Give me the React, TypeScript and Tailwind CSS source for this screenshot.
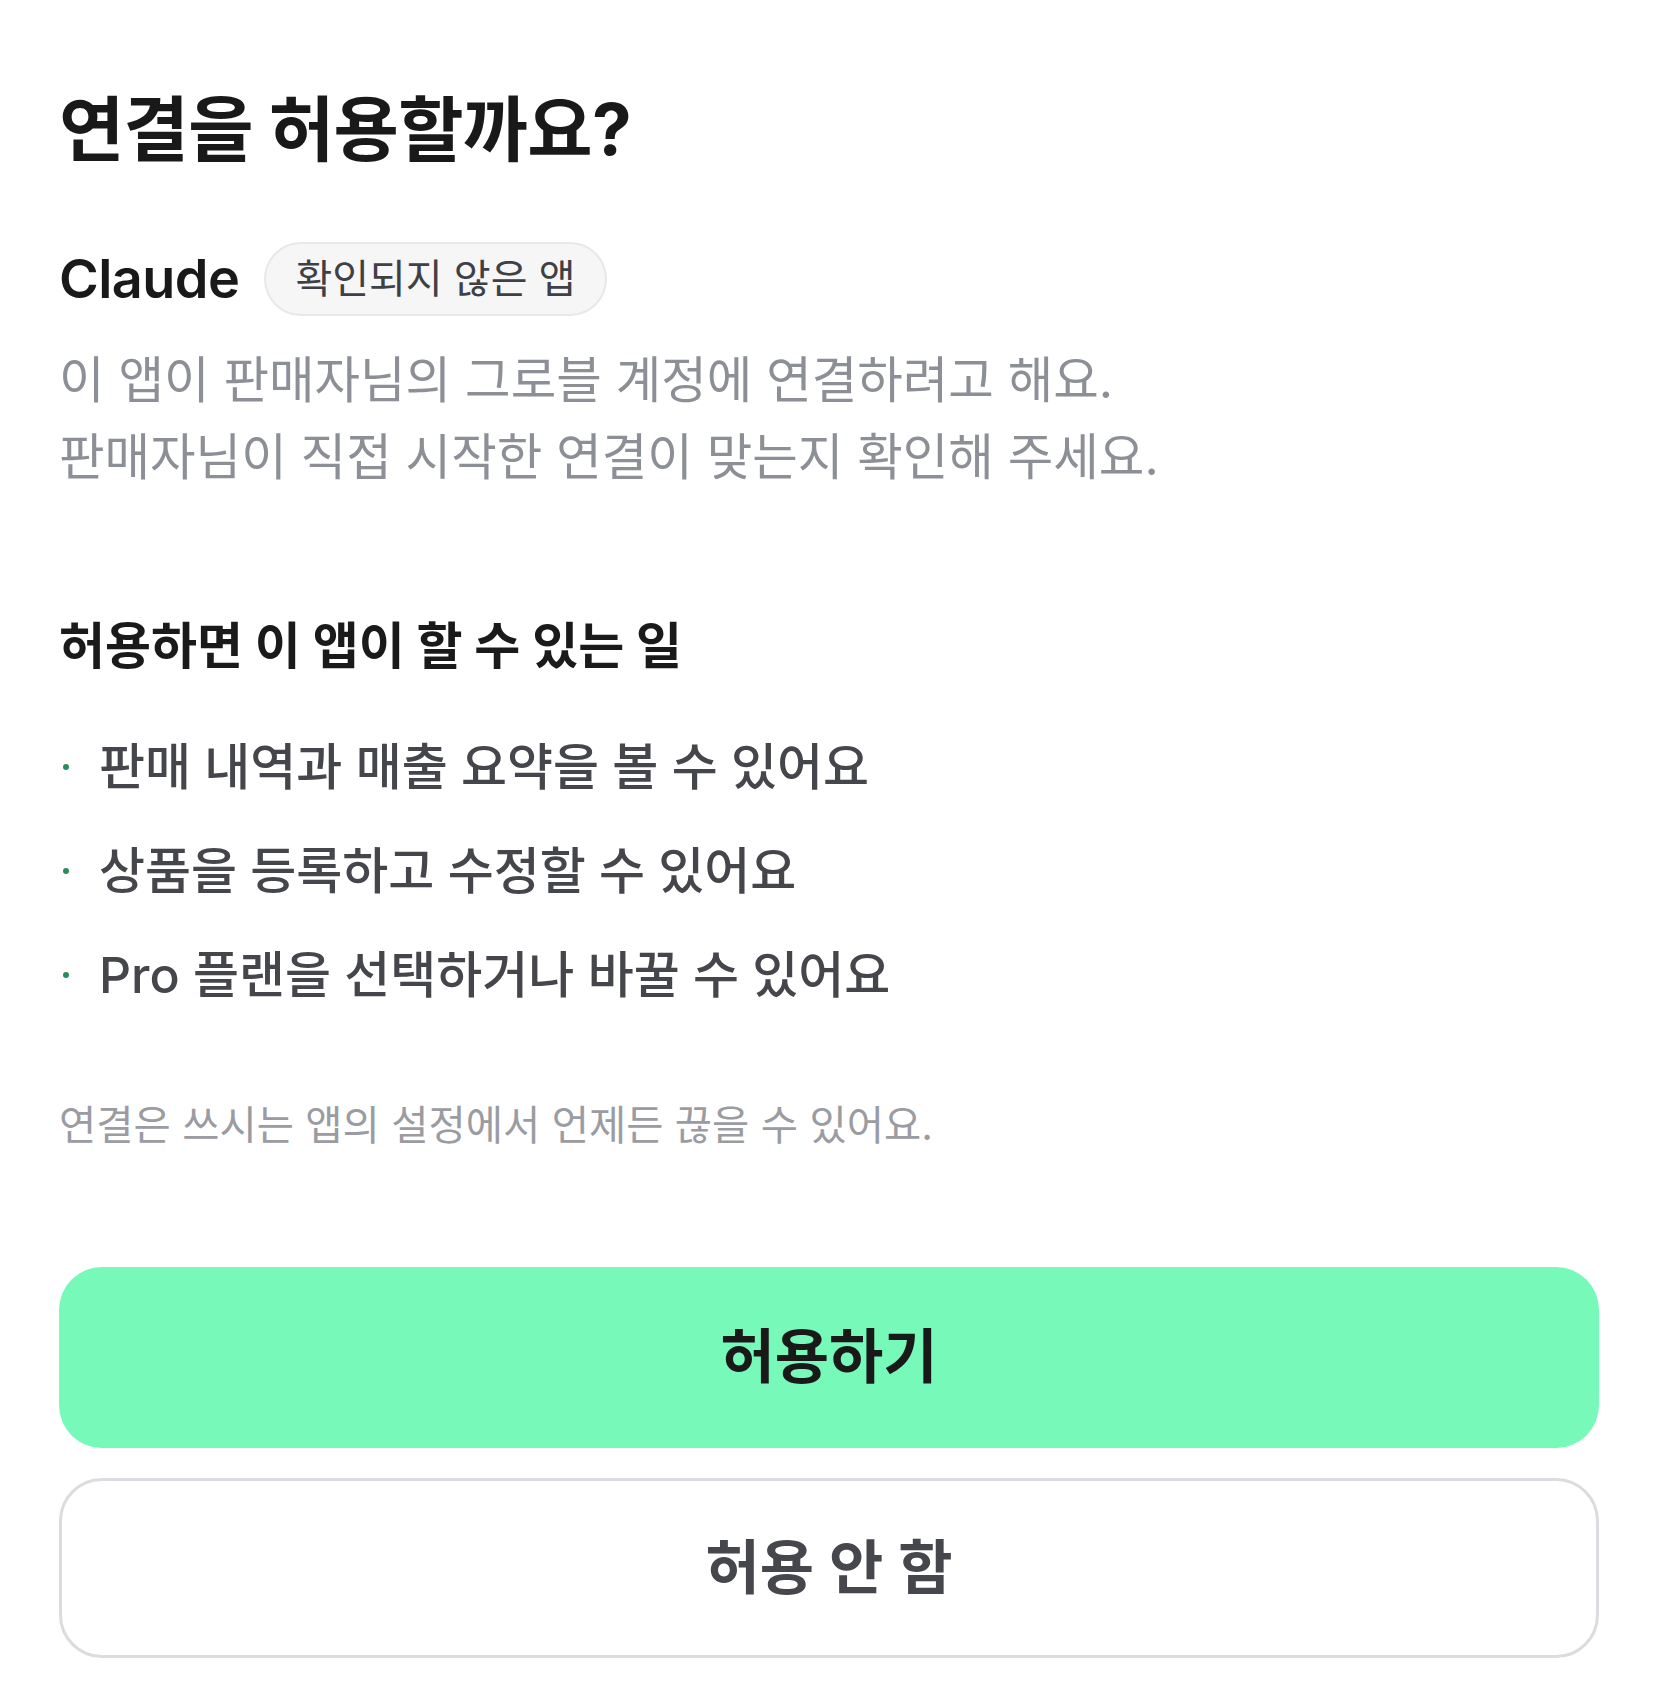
import React from 'react';

const permissions = [
  '판매 내역과 매출 요약을 볼 수 있어요',
  '상품을 등록하고 수정할 수 있어요',
  'Pro 플랜을 선택하거나 바꿀 수 있어요',
];

export default function App() {
  return (
    <div
      className="min-h-screen bg-white px-[59px] pt-[89px] pb-[40px]"
      style={{ fontFamily: "Inter, 'Noto Sans CJK KR', sans-serif" }}
    >
      {/* Header */}
      <h1 className="text-[71px] font-bold leading-[80px] tracking-[-0.01em] text-[#191919]">
        연결을 허용할까요?
      </h1>

      <div className="mt-[73px] flex items-center gap-[25px]">
        <span className="text-[54px] font-semibold leading-none tracking-[-0.01em] text-[#191919]">Claude</span>
        <span className="flex h-[74px] items-center rounded-full border-2 border-[#e8e8e8] bg-[#f6f6f6] px-[29px] text-[40px] leading-none text-[#3f4045]">
          확인되지 않은 앱
        </span>
      </div>

      <p className="mt-[26px] text-[49.5px] leading-[77px] text-[#8c8f96]">
        이 앱이 판매자님의 그로블 계정에 연결하려고 해요.
        <br />
        판매자님이 직접 시작한 연결이 맞는지 확인해 주세요.
      </p>

      {/* Permissions */}
      <h2 className="mt-[120px] text-[50px] font-bold leading-[60px] text-[#1a1a1a]">
        허용하면 이 앱이 할 수 있는 일
      </h2>

      <ul className="mt-[61px] flex flex-col gap-[44px]">
        {permissions.map((item) => (
          <li key={item} className="flex items-center gap-[30px]">
            <span className="ml-[4px] h-[6px] w-[6px] shrink-0 rounded-full bg-[#2e8a5c]" />
            <span className="text-[50px] font-medium leading-[60px] text-[#45464b]">{item}</span>
          </li>
        ))}
      </ul>

      <p className="mt-[96px] text-[40.5px] leading-[50px] text-[#9a9ca2]">
        연결은 쓰시는 앱의 설정에서 언제든 끊을 수 있어요.
      </p>

      {/* Actions */}
      <div className="mt-[116px] flex flex-col gap-[30px]">
        <button className="flex h-[181px] w-full items-center justify-center rounded-[43px] bg-[#76f9b9] text-[59px] font-bold text-[#191919]">
          허용하기
        </button>
        <button className="flex h-[180px] w-full items-center justify-center rounded-[43px] border-[3px] border-[#dcdce0] bg-white text-[59px] font-semibold text-[#46474c]">
          허용 안 함
        </button>
      </div>
    </div>
  );
}
